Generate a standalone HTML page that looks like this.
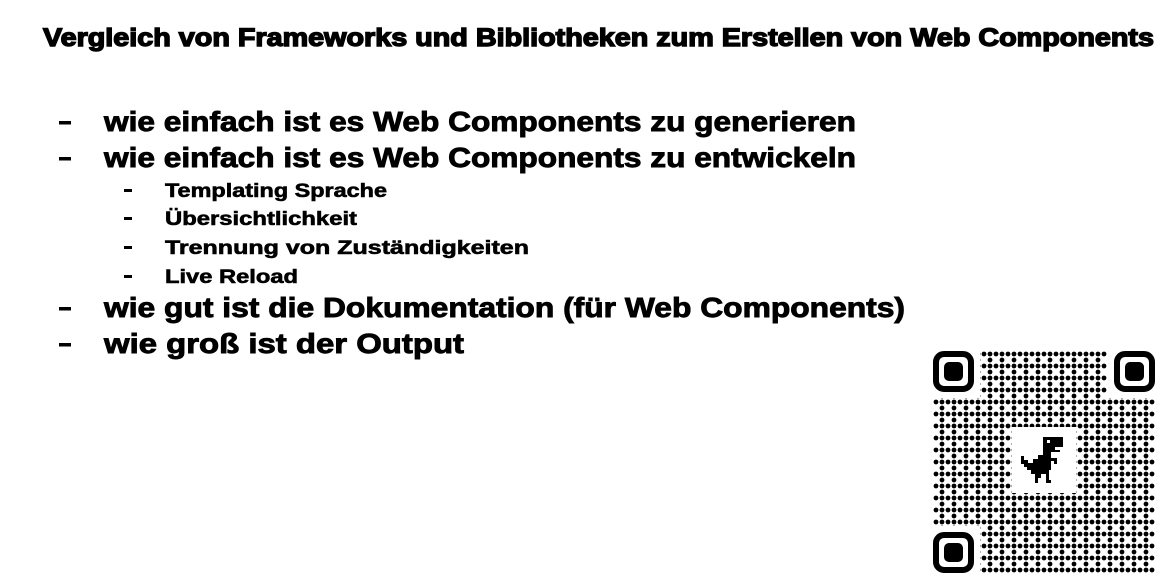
<!DOCTYPE html>
<html><head><meta charset="utf-8"><style>
html,body{margin:0;padding:0;background:#fff;width:1171px;height:585px;overflow:hidden}
svg{display:block}
text{font-family:"Liberation Sans",sans-serif;font-weight:bold;fill:#000;stroke:#000}
</style></head><body>
<svg width="1171" height="585" viewBox="0 0 1171 585" xmlns="http://www.w3.org/2000/svg">
<defs>
<pattern id="dots" x="933" y="351" width="12" height="12" patternUnits="userSpaceOnUse">
<circle cx="3" cy="3" r="2.4" fill="#000"/><circle cx="9" cy="3" r="2.4" fill="#000"/><circle cx="9" cy="9" r="2.4" fill="#000"/>
</pattern>
</defs>
<text x="43" y="46" font-size="25" stroke-width="1.4" textLength="1111" lengthAdjust="spacingAndGlyphs">Vergleich von Frameworks und Bibliotheken zum Erstellen von Web Components</text>

<g fill="#000">
<rect x="59" y="121" width="12" height="3.5"/>
<rect x="59" y="157" width="12" height="3.5"/>
<rect x="59" y="307" width="12" height="3.5"/>
<rect x="59" y="343" width="12" height="3.5"/>
<rect x="124" y="189" width="8" height="3"/>
<rect x="124" y="217" width="8" height="3"/>
<rect x="124" y="246" width="8" height="3"/>
<rect x="124" y="275" width="8" height="3"/>
</g>
<g stroke-width="0.9">
<text x="104" y="131" font-size="28" textLength="752" lengthAdjust="spacingAndGlyphs">wie einfach ist es Web Components zu generieren</text>
<text x="104" y="167" font-size="28" textLength="752" lengthAdjust="spacingAndGlyphs">wie einfach ist es Web Components zu entwickeln</text>
<text x="104" y="317" font-size="28" textLength="801" lengthAdjust="spacingAndGlyphs">wie gut ist die Dokumentation (für Web Components)</text>
<text x="104" y="353" font-size="28" textLength="360" lengthAdjust="spacingAndGlyphs">wie groß ist der Output</text>
</g>
<g stroke-width="0.6">
<text x="165" y="197" font-size="19" textLength="222" lengthAdjust="spacingAndGlyphs">Templating Sprache</text>
<text x="165" y="225" font-size="19" textLength="192" lengthAdjust="spacingAndGlyphs">Übersichtlichkeit</text>
<text x="165" y="254" font-size="19" textLength="364" lengthAdjust="spacingAndGlyphs">Trennung von Zuständigkeiten</text>
<text x="165" y="283" font-size="19" textLength="133" lengthAdjust="spacingAndGlyphs">Live Reload</text>
</g>

<!-- QR -->
<rect x="933" y="351" width="222" height="222" fill="url(#dots)"/>
<rect x="930" y="348" width="50" height="50" fill="#fff"/>
<rect x="1107" y="348" width="50" height="50" fill="#fff"/>
<rect x="930" y="526" width="50" height="50" fill="#fff"/>
<rect x="1012" y="427" width="64" height="66" fill="#fff"/>
<g fill="none" stroke="#000" stroke-width="6">
<rect x="936" y="354" width="35" height="35" rx="8"/>
<rect x="1117" y="354" width="35" height="35" rx="8"/>
<rect x="936" y="535" width="35" height="35" rx="8"/>
</g>
<g fill="#000">
<rect x="944" y="362" width="19" height="19" rx="5"/>
<rect x="1125" y="362" width="19" height="19" rx="5"/>
<rect x="944" y="543" width="19" height="19" rx="5"/>
</g>
<polygon fill="#000" points="1021,456 1024,456 1024,460 1028,460 1028,463 1033,463 1033,459 1038,459 1038,455 1043,455 1043,437 1063,437 1063,447 1055,447 1055,450 1060,450 1060,452 1051,452 1051,458 1057,458 1057,464 1054,464 1054,461 1051,461 1051,470 1049,470 1049,480 1051,480 1051,483 1046,483 1046,474 1041,474 1041,478 1038,478 1038,483 1035,483 1035,474 1031,474 1031,470 1027,470 1027,467 1024,467 1024,464 1021,464"/>
<rect x="1047" y="440" width="3" height="3" fill="#fff"/>
</svg>
</body></html>
